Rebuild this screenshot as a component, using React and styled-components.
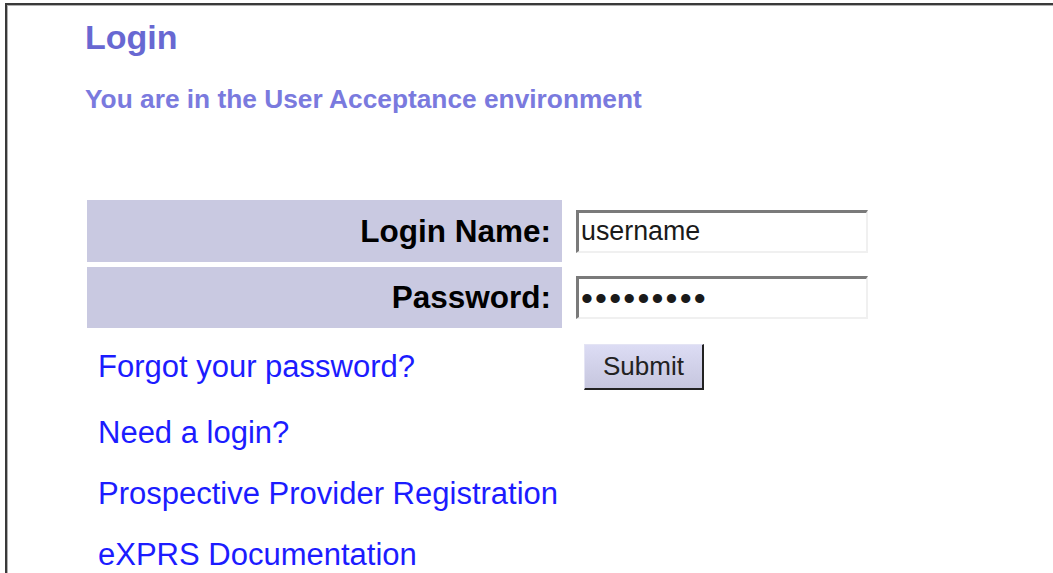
import React from "react";
import styled, { createGlobalStyle } from "styled-components";

const Global = createGlobalStyle`
  html, body {
    margin: 0;
    padding: 0;
    background: #ffffff;
  }
  body {
    font-family: "Liberation Sans", Arial, sans-serif;
    overflow: hidden;
  }
`;

const Frame = styled.div`
  margin: 3px 0 0 5px;
  min-height: 600px;
  border-top: 2px solid #3a3a3a;
  border-left: 2px solid #3a3a3a;
  box-shadow: inset 1px 1px 0 #b0b0b0;
  padding: 12px 0 0 78px;
`;

const Title = styled.h1`
  margin: 0;
  font-size: 34px;
  line-height: 40px;
  font-weight: bold;
  color: #6868d2;
`;

const Notice = styled.p`
  margin: 27px 0 0;
  font-size: 26.3px;
  line-height: 30px;
  font-weight: bold;
  color: #7a7ade;
`;

const Form = styled.div`
  margin: 86px 0 0 2px;
  display: grid;
  grid-template-columns: 475px 300px;
  grid-template-rows: 62px 61px 68px 54px 58px 54px;
  column-gap: 4px;
  row-gap: 5px;
  align-items: stretch;
`;

const Label = styled.div`
  background: #c9c9e1;
  display: flex;
  align-items: center;
  justify-content: flex-end;
  padding-right: 11px;
  font-size: 31.5px;
  font-weight: bold;
  color: #000;
`;

const InputCell = styled.div`
  display: flex;
  align-items: center;
  padding-left: 10px;
`;

const Field = styled.input`
  box-sizing: border-box;
  width: 292px;
  height: 43px;
  margin: 0;
  padding: 0 0 0 2px;
  border-style: solid;
  border-width: 3px 2px 2px 3px;
  border-color: #7a7a7a #f0f0f0 #f0f0f0 #7a7a7a;
  background: #fff;
  outline: none;
  font-family: "Liberation Sans", Arial, sans-serif;
  font-size: ${(p) => (p.type === "password" ? "34px" : "26.8px")};
  letter-spacing: ${(p) => (p.type === "password" ? "2.2px" : "0")};
  color: #1a1a1a;
`;

const LinkCell = styled.div`
  display: flex;
  align-items: center;
  padding-left: 11px;
  grid-column: ${(p) => (p.$wide ? "1 / span 2" : "auto")};
`;

const Link = styled.a`
  font-size: 31px;
  color: #1c1cff;
  text-decoration: none;
  cursor: pointer;
  white-space: nowrap;
`;

const ButtonCell = styled.div`
  display: flex;
  align-items: center;
  padding-left: 18px;
`;

const Submit = styled.button`
  box-sizing: border-box;
  width: 120px;
  height: 46px;
  padding: 0;
  border-style: solid;
  border-width: 1px 2px 2px 1px;
  border-color: #e4e4f4 #222 #222 #e4e4f4;
  background: linear-gradient(#dcdcf4, #c6c6de);
  font-family: "Liberation Sans", Arial, sans-serif;
  font-size: 26px;
  color: #222;
  cursor: pointer;
`;

export default function App() {
  return (
    <>
      <Global />
      <Frame>
        <Title>Login</Title>
        <Notice>You are in the User Acceptance environment</Notice>
        <Form>
          <Label>Login Name:</Label>
          <InputCell>
            <Field type="text" defaultValue="username" />
          </InputCell>
          <Label>Password:</Label>
          <InputCell>
            <Field type="password" defaultValue="password1" />
          </InputCell>
          <LinkCell>
            <Link>Forgot your password?</Link>
          </LinkCell>
          <ButtonCell>
            <Submit>Submit</Submit>
          </ButtonCell>
          <LinkCell $wide>
            <Link>Need a login?</Link>
          </LinkCell>
          <LinkCell $wide>
            <Link>Prospective Provider Registration</Link>
          </LinkCell>
          <LinkCell $wide>
            <Link>eXPRS Documentation</Link>
          </LinkCell>
        </Form>
      </Frame>
    </>
  );
}
